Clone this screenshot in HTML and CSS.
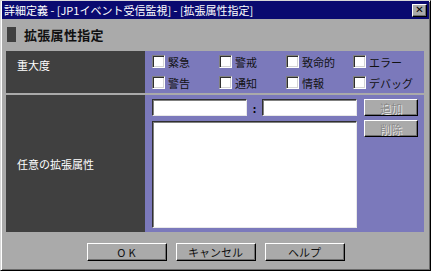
FILE: index.html
```html
<!DOCTYPE html>
<html lang="ja">
<head>
  <meta charset="UTF-8" />
  <title>詳細定義 - [JP1イベント受信監視] - [拡張属性指定]</title>
  <link rel="stylesheet" href="styles.css">
</head>
<body>

  <div class="window">
    <div class="titlebar">
      <span class="title">詳細定義 - [JP1イベント受信監視] - [拡張属性指定]</span>
      <button class="close" type="button">✕</button>
    </div>

    <div class="heading">
      <span class="mark"></span>
      <h2>拡張属性指定</h2>
    </div>

    <div class="table">
      <div class="head head-top">重大度</div>
      <div class="cell">
        <div class="checks">
          <label class="chk"><input type="checkbox" /> 緊急</label>
          <label class="chk"><input type="checkbox" /> 警戒</label>
          <label class="chk"><input type="checkbox" /> 致命的</label>
          <label class="chk"><input type="checkbox" /> エラー</label>
          <label class="chk"><input type="checkbox" /> 警告</label>
          <label class="chk"><input type="checkbox" /> 通知</label>
          <label class="chk"><input type="checkbox" /> 情報</label>
          <label class="chk"><input type="checkbox" /> デバッグ</label>
        </div>
      </div>

      <div class="head">任意の拡張属性</div>
      <div class="cell attrs">
        <div class="attr-left">
          <div class="pair">
            <input type="text" class="field" />
            <span class="colon">:</span>
            <input type="text" class="field" />
          </div>
          <textarea class="list"></textarea>
        </div>
        <div class="side">
          <button type="button" class="btn small" disabled>追加</button>
          <button type="button" class="btn small" disabled>削除</button>
        </div>
      </div>
    </div>

    <div class="footer">
      <button type="button" class="btn ok">OK</button>
      <button type="button" class="btn">キャンセル</button>
      <button type="button" class="btn">ヘルプ</button>
    </div>
  </div>

</body>
</html>
```

FILE: styles.css
```css
* { box-sizing: border-box; margin: 0; padding: 0; }
body {
  font-family: "Noto Sans CJK JP", "Noto Sans", sans-serif;
  font-size: 11px;
  background: #aaaaaa;
  color: #111;
}
.window {
  width: 431px;
  height: 271px;
  background: #aaaaaa;
  border: 1px solid;
  border-color: #d8d8d8 #000 #000 #d8d8d8;
  box-shadow: inset 1px 1px #fff, inset -1px -1px #6a6a6a;
}
.titlebar {
  display: flex;
  align-items: center;
  justify-content: space-between;
  height: 18px;
  margin: 0 1px;
  padding: 0 2px 0 2px;
  background: #0a0a70;
  color: #fff;
}
.title {
  font-size: 11px;
  line-height: 18px;
  white-space: nowrap;
}
.close {
  width: 15px;
  height: 13px;
  background: #aaaaaa;
  border: 1px solid;
  border-color: #fff #000 #000 #fff;
  box-shadow: inset -1px -1px #707070;
  font-family: "DejaVu Sans", sans-serif;
  font-size: 10px;
  font-weight: bold;
  line-height: 10px;
  color: #000;
}
.heading {
  display: flex;
  align-items: center;
  gap: 8px;
  margin: 8px 0 0 6px;
  height: 15px;
}
.mark {
  width: 9px;
  height: 15px;
  background: #404040;
}
.heading h2 {
  font-size: 13px;
  font-weight: bold;
  letter-spacing: 0.3px;
  color: #111;
}
.table {
  display: grid;
  grid-template-columns: 139px 279px;
  grid-template-rows: 42px 137px;
  row-gap: 2px;
  margin: 9px 0 0 5px;
}
.head {
  display: flex;
  align-items: center;
  padding-left: 11px;
  background: #404040;
  color: #fff;
}
.head-top {
  align-items: flex-start;
  padding-top: 6px;
}
.cell {
  background: #7b79bb;
  padding: 4px 7px;
}
.checks {
  display: grid;
  grid-template-columns: repeat(4, 67px);
  row-gap: 8px;
}
.chk {
  display: flex;
  align-items: center;
  gap: 3px;
  height: 13px;
  white-space: nowrap;
}
.chk input {
  appearance: none;
  width: 13px;
  height: 13px;
  background: #fff;
  border: 1px solid;
  border-color: #808080 #fff #fff #808080;
  box-shadow: inset 1px 1px #303030, inset -1px -1px #d4d4d4;
}
.attrs {
  display: flex;
  gap: 7px;
}
.attr-left {
  display: flex;
  flex-direction: column;
  gap: 5px;
  width: 205px;
}
.pair {
  display: flex;
  align-items: center;
}
.field {
  width: 95px;
  height: 17px;
  background: #fff;
  border: 1px solid;
  border-color: #303030 #e8e8e8 #e8e8e8 #303030;
  box-shadow: inset 1px 1px #808080;
}
.colon {
  width: 15px;
  text-align: center;
  font-weight: bold;
  color: #000;
}
.list {
  width: 205px;
  height: 110px;
  resize: none;
  background: #fff;
  border: 1px solid;
  border-color: #303030 #e8e8e8 #e8e8e8 #303030;
  box-shadow: inset 1px 1px #808080;
}
.side {
  display: flex;
  flex-direction: column;
  gap: 4px;
}
.btn {
  width: 80px;
  height: 18px;
  background: #aaaaaa;
  border: 1px solid;
  border-color: #fff #000 #000 #fff;
  box-shadow: inset -1px -1px #707070;
  font-family: inherit;
  font-size: 11px;
  color: #111;
}
.btn.ok {
  letter-spacing: 3px;
  text-indent: 3px;
}
.btn.small {
  width: 54px;
  height: 17px;
  color: #8a8a8a;
  text-shadow: 1px 1px #e8e8e8;
}
.footer {
  display: flex;
  justify-content: center;
  gap: 9px;
  margin-top: 11px;
}
```
